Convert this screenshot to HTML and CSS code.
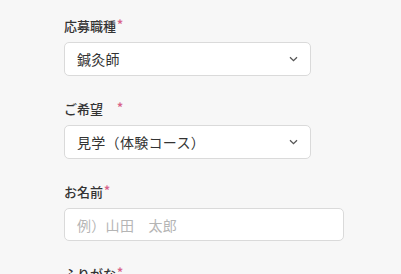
FILE: index.html
```html
<!DOCTYPE html>
<html lang="ja">
<head>
<meta charset="utf-8">
<link rel="stylesheet" href="styles.css">
</head>
<body>
<form class="form">
  <div class="field">
    <div class="label">応募職種<span class="req">*</span></div>
    <div class="control select">
      <span class="value">鍼灸師</span>
      <svg class="chev" width="9" height="6" viewBox="0 0 9 6"><path d="M1 1.2 L4.5 4.6 L8 1.2" fill="none" stroke="#555" stroke-width="1.3"/></svg>
    </div>
  </div>
  <div class="field">
    <div class="label">ご希望　<span class="req">*</span></div>
    <div class="control select">
      <span class="value">見学（体験コース）</span>
      <svg class="chev" width="9" height="6" viewBox="0 0 9 6"><path d="M1 1.2 L4.5 4.6 L8 1.2" fill="none" stroke="#555" stroke-width="1.3"/></svg>
    </div>
  </div>
  <div class="field">
    <div class="label">お名前<span class="req">*</span></div>
    <div class="control input">
      <span class="placeholder">例）山田　太郎</span>
    </div>
  </div>
  <div class="field">
    <div class="label">ふりがな<span class="req">*</span></div>
  </div>
</form>
</body>
</html>
```
FILE: styles.css
```css
html, body {
  margin: 0;
  padding: 0;
  background: #f7f7f7;
}
body {
  font-family: "Noto Sans CJK JP", "Noto Sans", sans-serif;
  color: #333;
}
.form {
  padding: 16px 0 0 64px;
}
.field {
  margin-bottom: 23px;
}
.label {
  font-size: 13px;
  line-height: 19px;
  font-weight: 500;
  color: #333;
  margin-bottom: 7px;
}
.req {
  color: #d8628a;
  font-size: 12px;
  font-weight: 700;
  vertical-align: top;
  line-height: 16px;
  margin-left: 1px;
}
.control {
  box-sizing: border-box;
  height: 34px;
  background: #fff;
  border: 1px solid #dadada;
  border-radius: 5px;
  display: flex;
  align-items: center;
  padding: 0 12px 0 12px;
  font-size: 14px;
}
.select {
  width: 247px;
  justify-content: space-between;
}
.input {
  width: 280px;
  height: 33px;
}
.value {
  color: #333;
  letter-spacing: 0.3px;
}
.placeholder {
  color: #b5b5b5;
  letter-spacing: 0.3px;
}
.chev {
  display: block;
}
```
